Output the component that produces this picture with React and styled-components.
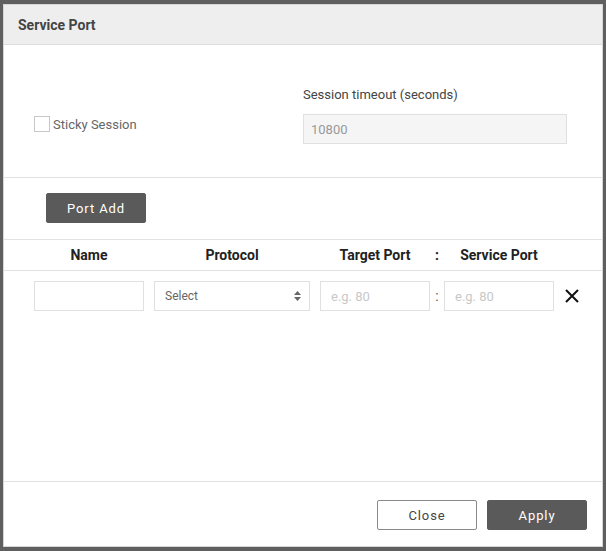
import React from 'react'
import styled, { createGlobalStyle } from 'styled-components'

const GlobalStyle = createGlobalStyle`
  html, body {
    margin: 0;
    padding: 0;
    background: #5f5f5f;
  }
  body {
    font-family: Roboto, 'Liberation Sans', sans-serif;
  }
  #root {
    padding: 4px 0 0 3px;
  }
`

const Dialog = styled.div`
  box-sizing: border-box;
  width: 600px;
  height: 543px;
  background: #fff;
  border: 1px solid #d6d6d6;
  display: flex;
  flex-direction: column;
`

const Header = styled.div`
  height: 39px;
  background: #eeeeee;
  border-bottom: 1px solid #dcdcdc;
  display: flex;
  align-items: center;
  padding-left: 14px;
  font-size: 14px;
  font-weight: 700;
  color: #444;
`

const SessionSection = styled.div`
  display: grid;
  grid-template-columns: 269px 264px;
  padding: 42px 0 33px 30px;
  border-bottom: 1px solid #e2e2e2;
`

const CheckRow = styled.label`
  align-self: end;
  margin-bottom: 12px;
  display: flex;
  align-items: center;
  gap: 3px;
  font-size: 13px;
  color: #666;
`

const CheckBox = styled.span`
  box-sizing: border-box;
  width: 16px;
  height: 16px;
  border: 1px solid #c8c8c8;
  background: #fff;
`

const Field = styled.div`
  display: flex;
  flex-direction: column;
`

const FieldLabel = styled.div`
  font-size: 13px;
  line-height: 16px;
  color: #444;
  margin-bottom: 11px;
`

const Input = styled.div`
  box-sizing: border-box;
  height: 30px;
  width: ${p => p.$width || 110}px;
  border: 1px solid #e0e0e0;
  background: ${p => (p.$disabled ? '#f5f5f5' : '#fff')};
  display: flex;
  align-items: center;
  padding: 0 10px 0 ${p => (p.$disabled ? 7 : 10)}px;
  font-size: ${p => (p.$small ? 12 : 13)}px;
  color: ${p => p.$color || '#999'};
`

const Toolbar = styled.div`
  padding: 15px 0 16px 42px;
  border-bottom: 1px solid #e2e2e2;
`

const Button = styled.button`
  box-sizing: border-box;
  width: 100px;
  height: 30px;
  border-radius: 2px;
  border: 1px solid ${p => (p.$light ? '#8a8a8a' : '#5a5a5a')};
  background: ${p => (p.$light ? '#fff' : '#5a5a5a')};
  color: ${p => (p.$light ? '#444' : '#fff')};
  font-family: Roboto, 'Liberation Sans', sans-serif;
  font-size: 13px;
  font-weight: 400;
  letter-spacing: 0.9px;
  padding: 0;
`

const Grid = styled.div`
  display: grid;
  grid-template-columns: 110px 10px 156px 10px 110px 14px 110px 11px 14px;
  align-items: center;
  padding-left: 30px;
`

const HeadRow = styled(Grid)`
  height: 30px;
  border-bottom: 1px solid #e2e2e2;
  font-size: 14px;
  font-weight: 700;
  color: #222;
`

const DataRow = styled(Grid)`
  padding-top: 10px;
`

const Cell = styled.div`
  grid-column: ${p => p.$col};
  text-align: center;
  display: flex;
  justify-content: center;
`

const Colon = styled(Cell)`
  font-size: 14px;
  color: ${p => (p.$head ? '#222' : '#555')};
`

const SelectBox = styled(Input)`
  justify-content: space-between;
  padding-right: 8px;
`

const Arrows = styled.svg`
  width: 7px;
  height: 10px;
`

const Body = styled.div`
  flex: 1;
`

const Footer = styled.div`
  border-top: 1px solid #e2e2e2;
  display: flex;
  justify-content: flex-end;
  gap: 10px;
  padding: 18px 15px 16px 0;
`

const App = () => (
  <>
    <GlobalStyle />
    <Dialog>
      <Header>Service Port</Header>
      <SessionSection>
        <CheckRow>
          <CheckBox />
          Sticky Session
        </CheckRow>
        <Field>
          <FieldLabel>Session timeout (seconds)</FieldLabel>
          <Input $width={264} $disabled>
            10800
          </Input>
        </Field>
      </SessionSection>
      <Toolbar>
        <Button>Port Add</Button>
      </Toolbar>
      <HeadRow>
        <Cell $col={1}>Name</Cell>
        <Cell $col={3}>Protocol</Cell>
        <Cell $col={5}>Target Port</Cell>
        <Colon $col={6} $head>:</Colon>
        <Cell $col={7}>Service Port</Cell>
      </HeadRow>
      <Body>
        <DataRow>
          <Cell $col={1}>
            <Input />
          </Cell>
          <Cell $col={3}>
            <SelectBox $width={156} $small $color="#666">
              Select
              <Arrows viewBox="0 0 7 10">
                <path d="M3.5 0 L7 4 H0 Z M0 6 H7 L3.5 10 Z" fill="#666" />
              </Arrows>
            </SelectBox>
          </Cell>
          <Cell $col={5}>
            <Input $color="#c8c8c8">e.g. 80</Input>
          </Cell>
          <Colon $col={6}>:</Colon>
          <Cell $col={7}>
            <Input $color="#c8c8c8">e.g. 80</Input>
          </Cell>
          <Cell $col={9}>
            <svg width="14" height="14" viewBox="0 0 14 14">
              <path d="M1 1 L13 13 M13 1 L1 13" stroke="#111" strokeWidth="2" />
            </svg>
          </Cell>
        </DataRow>
      </Body>
      <Footer>
        <Button $light>Close</Button>
        <Button>Apply</Button>
      </Footer>
    </Dialog>
  </>
)

export default App
